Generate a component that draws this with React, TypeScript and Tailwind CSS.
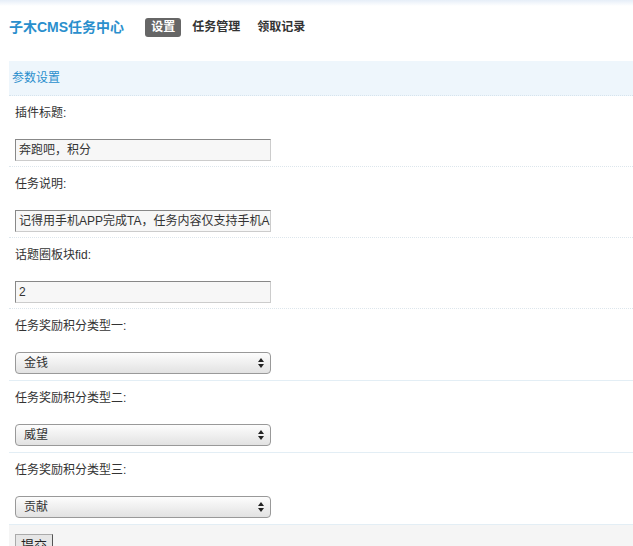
const font = { fontFamily: '"Liberation Sans", "Noto Sans CJK SC", sans-serif' };

const Arrows = () => (
  <svg width="6" height="10" viewBox="0 0 6 10" className="text-[#222]">
    <path d="M3 0 L6 4 H0 Z" fill="currentColor" />
    <path d="M3 10 L6 6 H0 Z" fill="currentColor" />
  </svg>
);

const Row = ({ label, children, last }: { label: string; children: React.ReactNode; last?: boolean }) => (
  <div className={`pl-[6px] pt-[7px] ${last ? "pb-[6px] border-b border-[#e3eef5]" : "pb-[5px] border-b border-dotted border-[#dde6ec]"}`}>
    <div className="h-[20px] leading-[20px] text-[12px] text-[#333]">{label}</div>
    <div className="mt-[16px] h-[22px]">{children}</div>
  </div>
);

const Input = ({ value }: { value: string }) => (
  <div className="w-[256px] h-[22px] border border-[#888] border-r-[#ccc] border-b-[#ccc] bg-[#f7f7f7] px-[3px] text-[12px] leading-[20px] text-[#333] overflow-hidden whitespace-nowrap">
    {value}
  </div>
);

const Select = ({ value }: { value: string }) => (
  <div className="w-[256px] h-[22px] rounded-[4px] border border-[#999] bg-gradient-to-b from-[#fdfdfd] to-[#e2e2e2] pl-[8px] pr-[6px] flex items-center justify-between text-[12px] text-[#333]">
    <span>{value}</span>
    <Arrows />
  </div>
);

export default function App() {
  return (
    <div style={font} className="w-[633px] h-[546px] bg-white overflow-hidden">
      <div className="h-[6px] bg-gradient-to-b from-[#e6eef8] to-white" />
      <div className="h-[42px] pl-[9px] flex items-center">
        <span className="text-[14px] font-bold text-[#2a8fcd]">子木CMS任务中心</span>
        <span className="ml-[21px] px-[6px] h-[19px] leading-[19px] rounded-[3px] bg-[#666] text-white text-[12px] font-bold">设置</span>
        <span className="ml-[11px] text-[12px] font-bold text-[#333]">任务管理</span>
        <span className="ml-[17px] text-[12px] font-bold text-[#333]">领取记录</span>
      </div>
      <div className="ml-[9px]">
        <div className="mt-[13px] h-[35px] bg-[#eef6fc] border-b border-dotted border-[#d6e4ee] pl-[3px] flex items-center text-[12px] text-[#2a8fcd]">
          参数设置
        </div>
        <Row label="插件标题:"><Input value="奔跑吧，积分" /></Row>
        <Row label="任务说明:"><Input value="记得用手机APP完成TA，任务内容仅支持手机APP" /></Row>
        <Row label="话题圈板块fid:"><Input value="2" /></Row>
        <Row label="任务奖励积分类型一:" last><Select value="金钱" /></Row>
        <Row label="任务奖励积分类型二:" last><Select value="威望" /></Row>
        <Row label="任务奖励积分类型三:" last><Select value="贡献" /></Row>
        <div className="h-[40px] bg-[#f5f5f5] pl-[6px] pt-[8px]">
          <button className="h-[24px] px-[5px] border border-[#555] border-t-[#aaa] border-l-[#aaa] bg-[#e6e6e6] text-[13px] text-[#222]">提交</button>
        </div>
      </div>
    </div>
  );
}
